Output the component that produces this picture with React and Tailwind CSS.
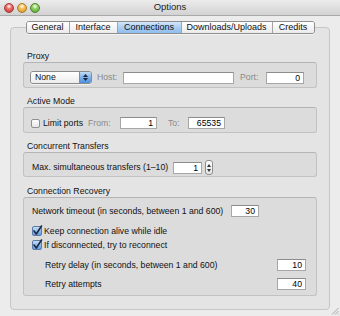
import React from "react";

const font = { fontFamily: '"Liberation Sans", Arial, sans-serif' };

function Light({ from, to, ring }) {
  return (
    <div
      className="w-[10px] h-[10px] rounded-full border"
      style={{
        borderColor: ring,
        background: `radial-gradient(circle at 50% 30%, #ffffff 0%, ${from} 35%, ${to} 100%)`,
      }}
    />
  );
}

function TitleBar() {
  return (
    <div className="relative h-[16px] flex items-center border-b border-[#a9a9a9] bg-gradient-to-b from-[#ececec] to-[#d2d2d2]">
      <div className="flex gap-[3px] pl-[4px]">
        <Light from="#f0736c" to="#c4302a" ring="#9c3a35" />
        <Light from="#f6c25e" to="#d98c1b" ring="#a77b2c" />
        <Light from="#95d46a" to="#4e9e25" ring="#4f8430" />
      </div>
      <div className="flex-1 text-center text-[9.5px] text-[#222] pr-[40px] -mt-[1px]">Options</div>
    </div>
  );
}

const tabs = [
  { label: "General", w: "w-[42px]" },
  { label: "Interface", w: "w-[48px]" },
  { label: "Connections", w: "w-[64px]", active: true },
  { label: "Downloads/Uploads", w: "w-[91px]" },
  { label: "Credits", w: "w-[42px]" },
];

function Tabs() {
  return (
    <div className="relative z-10 mt-[5px] flex justify-center">
      <div className="flex h-[13px] rounded-[3px] border border-[#8e8e8e] overflow-hidden shadow-[0_1px_0_rgba(255,255,255,0.6)]">
        {tabs.map((t, i) => (
          <div
            key={t.label}
            className={`${t.w} flex items-center justify-center text-[9px] leading-none text-[#111] ${
              i > 0 ? "border-l border-[#a4a4a4]" : ""
            } ${
              t.active
                ? "bg-gradient-to-b from-[#d3e6fa] via-[#a9cdf3] to-[#8fbdec] border-[#6f94c2]"
                : "bg-gradient-to-b from-[#ffffff] to-[#ebebeb]"
            }`}
          >
            {t.label}
          </div>
        ))}
      </div>
    </div>
  );
}

function Field({ value, w }) {
  return (
    <div
      className={`${w} h-[12px] bg-white border border-[#a7a7a7] border-t-[#8c8c8c] text-right pr-[3px] text-[8.7px] leading-[10px] text-black`}
    >
      {value}
    </div>
  );
}

function Checkbox({ checked }) {
  if (!checked) {
    return (
      <div className="w-[9px] h-[9px] rounded-[2px] border border-[#8f8f8f] bg-gradient-to-b from-white to-[#e6e6e6]" />
    );
  }
  return (
    <svg width="10" height="10" viewBox="0 0 10 10" className="overflow-visible">
      <defs>
        <linearGradient id="cbg" x1="0" y1="0" x2="0" y2="1">
          <stop offset="0" stopColor="#cfe3f8" />
          <stop offset="0.5" stopColor="#8fbbea" />
          <stop offset="1" stopColor="#5d9be0" />
        </linearGradient>
      </defs>
      <rect x="0.5" y="0.5" width="9" height="9" rx="1.5" fill="url(#cbg)" stroke="#5a7aa8" />
      <path d="M2 5 L4.3 8 L9.5 0" fill="none" stroke="#1c2a44" strokeWidth="1.6" strokeLinecap="round" strokeLinejoin="round" />
    </svg>
  );
}

function Select() {
  return (
    <div className="w-[62px] h-[13px] flex rounded-[3px] border border-[#8a8a8a] overflow-hidden shadow-[0_1px_0_rgba(255,255,255,0.6)]">
      <div className="flex-1 bg-gradient-to-b from-white to-[#ececec] pl-[4px] text-[8.7px] leading-[11px] text-[#111]">None</div>
      <div className="w-[12px] border-l border-[#6c8fbd] bg-gradient-to-b from-[#c4dcf6] via-[#7fb0e8] to-[#4f8fdc] flex flex-col items-center justify-center gap-[1px]">
        <svg width="5" height="3" viewBox="0 0 5 3"><path d="M2.5 0 L5 3 L0 3 Z" fill="#1b2640" /></svg>
        <svg width="5" height="3" viewBox="0 0 5 3"><path d="M0 0 L5 0 L2.5 3 Z" fill="#1b2640" /></svg>
      </div>
    </div>
  );
}

function Stepper() {
  return (
    <div className="w-[8px] h-[15px] rounded-[3px] border border-[#8e8e8e] bg-gradient-to-b from-white to-[#e4e4e4] flex flex-col items-center justify-center gap-[2px]">
      <svg width="4" height="3" viewBox="0 0 4 3"><path d="M2 0 L4 3 L0 3 Z" fill="#333" /></svg>
      <svg width="4" height="3" viewBox="0 0 4 3"><path d="M0 0 L4 0 L2 3 Z" fill="#333" /></svg>
    </div>
  );
}

function Section({ title, first, h, children, gap = "mt-[8px]" }) {
  return (
    <div className={first ? "" : gap}>
      <div className="h-[10px] leading-[10px] pl-[16px] text-[8.7px] text-[#111]">{title}</div>
      <div className={`mt-[1px] mx-[12px] ${h} rounded-[3px] border border-[#c2c2c2] border-t-[#b4b4b4] bg-[#dcdcdc]`}>
        {children}
      </div>
    </div>
  );
}

const txt = "text-[8.7px] leading-none text-[#111] whitespace-nowrap";
const dim = "text-[8.7px] leading-none text-[#8a8a8a] whitespace-nowrap";

export default function App() {
  return (
    <div className="w-[340px] h-[316px] overflow-hidden bg-[#ececec] relative" style={font}>
      <TitleBar />
      <Tabs />
      <div className="-mt-[7px] mx-[10px] h-[283px] rounded-[4px] border border-[#c6c6c6] bg-[#e4e4e4] pt-[23px]">
        <Section title="Proxy" first h="h-[26px]">
          <div className="flex items-center pt-[8px] pl-[6px]">
            <Select />
            <div className={`w-[31px] pl-[5px] ${dim}`}>Host:</div>
            <Field value="" w="w-[111px]" />
            <div className={`w-[32px] pl-[6px] ${dim}`}>Port:</div>
            <Field value="0" w="w-[38px]" />
          </div>
        </Section>

        <Section title="Active Mode" h="h-[26px]">
          <div className="flex items-center h-[12px] mt-[9px] pl-[7px]">
            <div className="w-[57px] flex items-center gap-[3px]">
              <Checkbox />
              <span className={txt}>Limit ports</span>
            </div>
            <div className={`w-[32px] ${dim}`}>From:</div>
            <Field value="1" w="w-[37px]" />
            <div className={`w-[31px] pl-[11px] ${dim}`}>To:</div>
            <Field value="65535" w="w-[37px]" />
          </div>
        </Section>

        <Section title="Concurrent Transfers" h="h-[25px]">
          <div className="flex items-center h-[15px] mt-[7px] pl-[8px]">
            <div className={`w-[141px] ${txt}`}>Max. simultaneous transfers (1–10)</div>
            <Field value="1" w="w-[29px]" />
            <div className="ml-[3px]">
              <Stepper />
            </div>
          </div>
        </Section>

        <Section title="Connection Recovery" h="h-[99px]" gap="mt-[9px]">
          <div className="flex items-center h-[12px] mt-[7px] pl-[8px]">
            <div className={`w-[199px] ${txt}`}>Network timeout (in seconds, between 1 and 600)</div>
            <Field value="30" w="w-[28px]" />
          </div>
          <div className="flex items-center gap-[2px] h-[12px] mt-[8px] pl-[8px]">
            <Checkbox checked />
            <span className={txt}>Keep connection alive while idle</span>
          </div>
          <div className="flex items-center gap-[2px] h-[12px] mt-[2px] pl-[8px]">
            <Checkbox checked />
            <span className={txt}>If disconnected, try to reconnect</span>
          </div>
          <div className="flex items-center justify-between h-[12px] mt-[8px] pl-[21px] pr-[10px]">
            <span className={txt}>Retry delay (in seconds, between 1 and 600)</span>
            <Field value="10" w="w-[29px]" />
          </div>
          <div className="flex items-center justify-between h-[12px] mt-[7px] pl-[21px] pr-[10px]">
            <span className={txt}>Retry attempts</span>
            <Field value="40" w="w-[29px]" />
          </div>
        </Section>
      </div>
      <svg className="absolute right-[1px] bottom-[1px]" width="8" height="8" viewBox="0 0 8 8">
        <path d="M7.5 1 L1 7.5 M7.5 4 L4 7.5 M7.5 6.5 L6.5 7.5" stroke="#9a9a9a" strokeWidth="0.8" />
      </svg>
    </div>
  );
}
